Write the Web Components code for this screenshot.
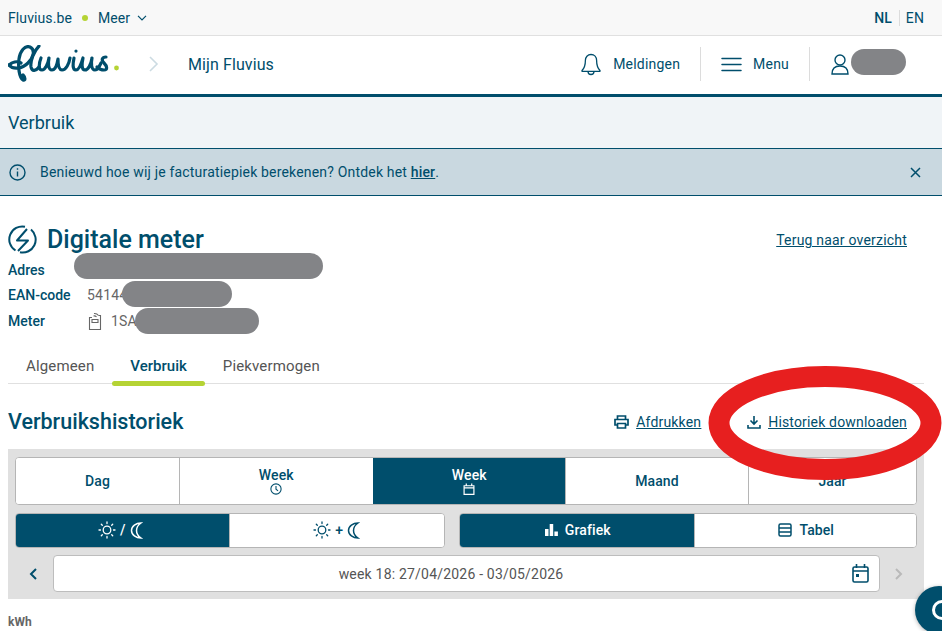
<!DOCTYPE html>
<html lang="nl">
<head>
<meta charset="utf-8">
<title>Fluvius</title>
<style>
  html, body { margin: 0; padding: 0; background: #fff; }
  body { font-family: Roboto, "Liberation Sans", sans-serif; color: #004e6c; width: 942px; height: 631px; overflow: hidden; position: relative; }
</style>
</head>
<body>
<top-bar></top-bar>
<main-nav></main-nav>
<page-title>Verbruik</page-title>
<info-banner>Benieuwd hoe wij je facturatiepiek berekenen? Ontdek het <a href="#" style="color:inherit;font-weight:500">hier</a>.</info-banner>
<meter-head></meter-head>
<tab-row></tab-row>
<history-head></history-head>
<filter-panel></filter-panel>
<chart-unit>kWh</chart-unit>
<screen-marks></screen-marks>

<script>
const blue = "#004e6c";

class TopBar extends HTMLElement {
  constructor() {
    super();
    this.attachShadow({ mode: "open" });
    this.shadowRoot.innerHTML = `
      <style>
        :host { display: flex; align-items: center; height: 35px; padding: 0 18px 0 8px; background: #f8f8f8; border-bottom: 1px solid #e0e0e0; font-size: 14px; letter-spacing: .1px; }
        .dot { width: 6px; height: 6px; border-radius: 50%; background: #b5d334; margin: 0 10px 0 10px; }
        svg { margin-left: 7px; }
        .lang { margin-left: auto; display: flex; align-items: center; font-size: 14px; }
        .lang b { font-weight: 500; padding-right: 7px; border-right: 1px solid #dcdcdc; line-height: 16px; }
        .lang span { padding-left: 6px; }
      </style>
      <span>Fluvius.be</span><i class="dot"></i><span>Meer</span>
      <svg width="10" height="6" viewBox="0 0 10 6" fill="none" stroke="${blue}" stroke-width="1.2"><path d="M1 .8l4 4 4-4"/></svg>
      <div class="lang"><b>NL</b><span>EN</span></div>`;
  }
}

class MainNav extends HTMLElement {
  constructor() {
    super();
    this.attachShadow({ mode: "open" });
    this.shadowRoot.innerHTML = `
      <style>
        :host { display: flex; align-items: center; padding: 0 0 2px 8px; box-sizing: border-box; height: 61px; border-bottom: 3px solid ${blue}; font-size: 14px; letter-spacing: .2px; }
        .crumb { margin: 0 0 0 29px; }
        .title { font-size: 16px; margin-left: 29px; letter-spacing: .1px; }
        .right { margin-left: auto; display: flex; align-items: center; height: 34px; }
        .item { display: flex; align-items: center; height: 100%; }
        .sep { border-right: 1px solid #dcdcdc; }
        .bell { padding-right: 20px; gap: 12px; }
        .menu { padding: 0 20px; gap: 11px; }
        .user { padding-left: 21px; width: 132px; box-sizing: border-box; }
      </style>
      <svg width="112" height="38" viewBox="0 0 112 38" fill="none" stroke="${blue}" stroke-width="3.2" stroke-linecap="round" stroke-linejoin="round">
        <path d="M1 20C4 17 9 16 13 18"/>
        <path d="M1 20C5 25 14 24 20 18C25 13 28 5 22 2C17 0 12 6 11 14C10 22 11 32 15 35C18 36 17 32 15 30"/>
        <path d="M31 1C26 6 22 16 23 22C24 27 28 26 31 22"/>
        <path d="M33 13C31 18 30 25 34 25C37 25 40 19 41 13C40 18 40 25 44 25C47 25 49 20 50 14C50 19 51 25 54 25C58 25 61 19 62 13"/>
        <path d="M66 13C65 18 64 25 68 25C71 25 73 20 75 13C74 18 73 25 77 25C80 25 83 20 84 13C83 18 83 25 87 25C90 25 91 22 93 18"/>
        <path d="M98 12C94 12 93 15 96 18C99 21 100 25 96 25C93 25 91 24 89 22"/>
        <path d="M68 6v.1"/>
        <circle cx="108.500" cy="23" r="2.400" fill="#b5d334" stroke="none"/>
      </svg>
      <svg class="crumb" width="10" height="16" viewBox="0 0 10 16" fill="none" stroke="#ccdbe2" stroke-width="1.6"><path d="M1 1l7 7-7 7"/></svg>
      <span class="title">Mijn Fluvius</span>
      <div class="right">
        <div class="item bell sep">
          <svg width="20" height="23" viewBox="0 0 20 23" fill="none" stroke="${blue}" stroke-width="1.3" stroke-linejoin="round"><path d="M10 1.500c-3.400 0-5.600 2.600-5.600 5.800 0 5-1 8-3.400 10.200v.8h18v-.8c-2.400-2.200-3.400-5.200-3.400-10.200 0-3.200-2.200-5.800-5.600-5.800z"/><path d="M7 18.500c0 4 6 4 6 0"/></svg>
          <span>Meldingen</span>
        </div>
        <div class="item menu sep">
          <svg width="21" height="15" viewBox="0 0 21 15" fill="none" stroke="${blue}" stroke-width="1.500" stroke-linecap="round"><path d="M1 1.500h19M1 7.500h19M1 13.500h19"/></svg>
          <span>Menu</span>
        </div>
        <div class="item user">
          <svg width="18" height="21" viewBox="0 0 18 21" fill="none" stroke="${blue}" stroke-width="1.400"><circle cx="9" cy="6" r="5"/><path d="M1 20c0-5.500 3.500-8 8-8s8 2.500 8 8H1z"/></svg>
        </div>
      </div>`;
  }
}

class PageTitle extends HTMLElement {
  constructor() {
    super();
    this.attachShadow({ mode: "open" });
    this.shadowRoot.innerHTML = `
      <style>
        :host { display: flex; align-items: center; height: 51px; padding-left: 8px; background: #f0f4f7; border-bottom: 1px solid ${blue}; font-size: 18px; }
      </style><slot></slot>`;
  }
}

class InfoBanner extends HTMLElement {
  constructor() {
    super();
    this.attachShadow({ mode: "open" });
    this.shadowRoot.innerHTML = `
      <style>
        :host { display: flex; align-items: center; height: 46px; padding: 0 21px 0 9px; background: #c9d8e0; border-bottom: 1px solid ${blue}; font-size: 14px; letter-spacing: .18px; gap: 14px; }
        .x { margin-left: auto; }
      </style>
      <svg width="17" height="17" viewBox="0 0 17 17" fill="none" stroke="${blue}" stroke-width="1.400"><circle cx="8.500" cy="8.500" r="7.500"/><path d="M8.500 7.500v5M8.500 4.300v1.500"/></svg>
      <span><slot></slot></span>
      <svg class="x" width="11" height="11" viewBox="0 0 11 11" fill="none" stroke="${blue}" stroke-width="1.500"><path d="M1 1l9 9M10 1l-9 9"/></svg>`;
  }
}

class MeterHead extends HTMLElement {
  constructor() {
    super();
    this.attachShadow({ mode: "open" });
    this.shadowRoot.innerHTML = `
      <style>
        :host { display: block; padding: 28px 35px 0 8px; height: 150px; box-sizing: border-box; }
        .top { display: flex; align-items: center; gap: 10px; height: 30px; }
        h1 { margin: 0; font-size: 25px; font-weight: 500; }
        a { margin: 2px 0 0 auto; color: inherit; font-size: 14px; letter-spacing: .2px; }
        dl { margin: 3px 0 0; display: grid; grid-template-columns: 79px auto; grid-auto-rows: 25.500px; align-items: center; font-size: 14px; }
        dt { font-weight: 500; }
        dd { margin: 0; color: #666; display: flex; align-items: center; gap: 8px; letter-spacing: .2px; }
      </style>
      <div class="top">
        <svg width="29" height="29" viewBox="0 0 29 29" fill="none" stroke="${blue}" stroke-width="2"><path d="M17 1.700A13 13 0 0 0 7.500 25.500M12 27.300A13 13 0 0 0 23 4.600"/><path d="M19 4L9 15.500h11L10 26" stroke-linejoin="round"/></svg>
        <h1>Digitale meter</h1>
        <a href="#">Terug naar overzicht</a>
      </div>
      <dl>
        <dt>Adres</dt><dd></dd>
        <dt>EAN-code</dt><dd>54144</dd>
        <dt>Meter</dt><dd>
          <svg width="16" height="20" viewBox="0 0 16 20" fill="none" stroke="#666" stroke-width="1.100"><path d="M5 6.500H2.500v12h11v-14h-2"/><path d="M5 8.500h6v3H5z"/><path d="M6.500 5a3 3 0 0 1 3 1M7 2.500a5 5 0 0 1 4.500 2"/></svg>
          1SA</dd>
      </dl>`;
  }
}

class TabRow extends HTMLElement {
  constructor() {
    super();
    this.attachShadow({ mode: "open" });
    this.shadowRoot.innerHTML = `
      <style>
        :host { display: flex; margin: 0 18px 0 8px; height: 37px; border-bottom: 1px solid #e0e0e0; box-sizing: content-box; font-size: 15px; color: #555; letter-spacing: .15px; }
        span { padding: 2px 18px 0; box-sizing: border-box; position: relative; display: flex; align-items: center; height: 37px; }
        .on { color: ${blue}; font-weight: 500; letter-spacing: 0; }
        .on::after { content: ""; position: absolute; left: 0; right: 0; bottom: -3px; height: 5px; border-radius: 3px; background: #b5d334; }
      </style>
      <span>Algemeen</span><span class="on">Verbruik</span><span>Piekvermogen</span>`;
  }
}

class HistoryHead extends HTMLElement {
  constructor() {
    super();
    this.attachShadow({ mode: "open" });
    this.shadowRoot.innerHTML = `
      <style>
        :host { display: flex; align-items: center; height: 65px; padding: 9px 35px 0 8px; box-sizing: border-box; font-size: 14px; letter-spacing: .17px; }
        h2 { margin: 0 auto 0 0; font-size: 21.500px; font-weight: 500; letter-spacing: 0; }
        a { color: inherit; display: flex; align-items: center; margin-top: 2px; }
        a + a { margin-left: 46px; }
        a span { text-decoration: underline; }
        svg { margin-right: 7px; }
      </style>
      <h2>Verbruikshistoriek</h2>
      <a href="#"><svg width="15" height="14" viewBox="0 0 15 14" fill="none" stroke="${blue}" stroke-width="1.700"><path d="M3.500 4V1h8v3M3.500 10H1V4.500h13V10h-2.500M3.500 8.500h8V13h-8z"/></svg><span>Afdrukken</span></a>
      <a href="#"><svg width="14" height="13" viewBox="0 0 14 13" fill="none" stroke="${blue}" stroke-width="1.600"><path d="M7 0v8M3.500 4.500L7 8l3.500-3.500M1 9v3h12V9"/></svg><span>Historiek downloaden</span></a>`;
  }
}

class SegGroup extends HTMLElement {
  constructor() {
    super();
    this.attachShadow({ mode: "open" });
    this.shadowRoot.innerHTML = `
      <style>
        :host { display: grid; grid-auto-flow: column; border: 1px solid #b5b5b5; border-radius: 4px; overflow: hidden; background: #fff; font-size: 14px; font-weight: 500; box-sizing: border-box; letter-spacing: .1px; }
      </style><slot></slot>`;
  }
}

class SegButton extends HTMLElement {
  constructor() {
    super();
    this.attachShadow({ mode: "open" });
    this.shadowRoot.innerHTML = `
      <style>
        :host { display: flex; flex-direction: column; align-items: center; justify-content: center; color: ${blue}; background: #fff; border-left: 1px solid #b5b5b5; box-sizing: border-box; min-width: 0; line-height: 16px; }
        :host(:first-child) { border-left: 0; }
        :host([active]) { background: ${blue}; color: #fff; border-left-color: ${blue}; }
        div { display: flex; align-items: center; gap: var(--seg-gap, 7px); }
      </style><div><slot></slot></div><slot name="below"></slot>`;
  }
}

const sun = `<svg width="18" height="18" viewBox="0 0 18 18" fill="none" stroke="currentColor" stroke-width="1.300" stroke-linecap="round"><circle cx="9" cy="9" r="3.800"/><path d="M9 1v1.500M9 15.500V17M1 9h1.500M15.500 9H17M3.300 3.300l1 1M13.700 13.700l1 1M3.300 14.700l1-1M13.700 4.300l1-1"/></svg>`;
const moon = `<svg width="13" height="17" viewBox="0 0 13 17" fill="none" stroke="currentColor" stroke-width="1.500"><path d="M11 1C6 1 1.500 4 1.500 8.500S6 16 11 16C8 14 6.500 11.500 6.500 8.500S8 3 11 1z"/></svg>`;

class FilterPanel extends HTMLElement {
  constructor() {
    super();
    this.attachShadow({ mode: "open" });
    this.shadowRoot.innerHTML = `
      <style>
        :host { display: flex; flex-direction: column; gap: 7.500px; margin: 0 18px 0 8px; padding: 7.500px 7px 7px; height: 150px; box-sizing: border-box; background: #e0e0e0; }
        .periods { height: 48.500px; grid-template-columns: 163px 193.500px 192.500px 183px 1fr; }
        .pair { display: grid; grid-template-columns: 430px 458px; justify-content: space-between; height: 35px; }
        .pair .a { grid-template-columns: 212.500px 1fr; --seg-gap: 4px; }
        .pair .a seg-button:first-child { padding-right: 4px; }
        .pair .b { grid-template-columns: 233.500px 1fr; }
        .pair .b seg-button { padding-left: 2px; }
        .date { display: flex; align-items: center; height: 37px; }
        .arrow { width: 38px; display: flex; justify-content: center; box-sizing: border-box; }
        .prev { padding-right: 3px; }
        .next { width: 37px; }
        .field { flex: 1; height: 100%; display: flex; align-items: center; justify-content: center; position: relative; background: #fff; border: 1px solid #bdbdbd; border-radius: 4px; box-sizing: border-box; padding-right: 31px; font-size: 14px; color: #555; letter-spacing: .2px; }
        .field svg { position: absolute; right: 10px; top: 8px; }
      </style>
      <seg-group class="periods">
        <seg-button>Dag</seg-button>
        <seg-button>Week<svg slot="below" width="12" height="12" viewBox="0 0 11 11" fill="none" stroke="currentColor" stroke-width="1"><circle cx="5.500" cy="5.500" r="4.700"/><path d="M5.500 2.700v3l1.900 1.500"/></svg></seg-button>
        <seg-button active>Week<svg slot="below" width="12" height="12" viewBox="0 0 11 11" fill="none" stroke="currentColor" stroke-width="1.100"><path d="M1 2.500h9v8H1zM1 4.500h9M3 .5v2M8 .5v2"/></svg></seg-button>
        <seg-button>Maand</seg-button>
        <seg-button>Jaar</seg-button>
      </seg-group>
      <div class="pair">
        <seg-group class="a">
          <seg-button active>${sun}<span>/</span>${moon}</seg-button>
          <seg-button>${sun}<span>+</span>${moon}</seg-button>
        </seg-group>
        <seg-group class="b">
          <seg-button active><svg width="13" height="12" viewBox="0 0 13 12" fill="currentColor"><rect y="5" width="3.500" height="7"/><rect x="4.700" width="3.500" height="12"/><rect x="9.400" y="7.500" width="3.500" height="4.500"/></svg>Grafiek</seg-button>
          <seg-button><svg width="14" height="14" viewBox="0 0 14 14" fill="none" stroke="currentColor" stroke-width="1.500"><rect x="1" y="1" width="12" height="12" rx="1.500"/><path d="M1 5h12M1 9h12"/></svg>Tabel</seg-button>
        </seg-group>
      </div>
      <div class="date">
        <div class="arrow prev"><svg width="8" height="12" viewBox="0 0 8 12" fill="none" stroke="${blue}" stroke-width="2"><path d="M7 1L2 6l5 5"/></svg></div>
        <div class="field">week 18: 27/04/2026 - 03/05/2026
          <svg width="17" height="19" viewBox="0 0 17 19" fill="none" stroke="${blue}" stroke-width="1.600"><rect x="1" y="3" width="15" height="15" rx="1.500"/><path d="M1 7h15M4.500 0v4M12.500 0v4"/><rect x="4" y="10" width="3" height="3" fill="${blue}" stroke="none"/></svg>
        </div>
        <div class="arrow next"><svg width="8" height="12" viewBox="0 0 8 12" fill="none" stroke="#b9b9b9" stroke-width="2"><path d="M1 1l5 5-5 5"/></svg></div>
      </div>`;
  }
}

class ChartUnit extends HTMLElement {
  constructor() {
    super();
    this.attachShadow({ mode: "open" });
    this.shadowRoot.innerHTML = `
      <style>:host { display: block; margin: 16px 0 0 8px; font-size: 12px; font-weight: 700; color: #666; line-height: 14px; }</style><slot></slot>`;
  }
}

// redactions, red marker and the chat button lie over the page
class ScreenMarks extends HTMLElement {
  constructor() {
    super();
    this.attachShadow({ mode: "open" });
    this.shadowRoot.innerHTML = `
      <style>
        :host { position: absolute; inset: 0; display: block; pointer-events: none; }
        i { position: absolute; background: #838487; border-radius: 13px; display: block; }
        svg { position: absolute; left: 0; top: 0; }
        .chat { position: absolute; left: 915px; top: 586px; width: 48px; height: 48px; border-radius: 50%; background: ${blue}; box-shadow: 0 1px 4px rgba(0,0,0,.3); }
        .chat::after { content: ""; position: absolute; left: 17px; top: 14px; width: 14px; height: 14px; border: 3px solid #fff; border-radius: 50%; }
      </style>
      <i style="left:851px;top:49px;width:55px;height:26px"></i>
      <i style="left:74px;top:253px;width:249px;height:26px"></i>
      <i style="left:122px;top:281px;width:110px;height:26px"></i>
      <i style="left:135px;top:308px;width:124px;height:26px"></i>
      <div class="chat"></div>
      <svg width="942" height="631" viewBox="0 0 942 631" fill="none"><ellipse cx="825" cy="423" rx="106" ry="46.500" stroke="#e71f1f" stroke-width="21"/></svg>`;
  }
}

customElements.define("top-bar", TopBar);
customElements.define("main-nav", MainNav);
customElements.define("page-title", PageTitle);
customElements.define("info-banner", InfoBanner);
customElements.define("meter-head", MeterHead);
customElements.define("tab-row", TabRow);
customElements.define("history-head", HistoryHead);
customElements.define("seg-group", SegGroup);
customElements.define("seg-button", SegButton);
customElements.define("filter-panel", FilterPanel);
customElements.define("chart-unit", ChartUnit);
customElements.define("screen-marks", ScreenMarks);
</script>
</body>
</html>
